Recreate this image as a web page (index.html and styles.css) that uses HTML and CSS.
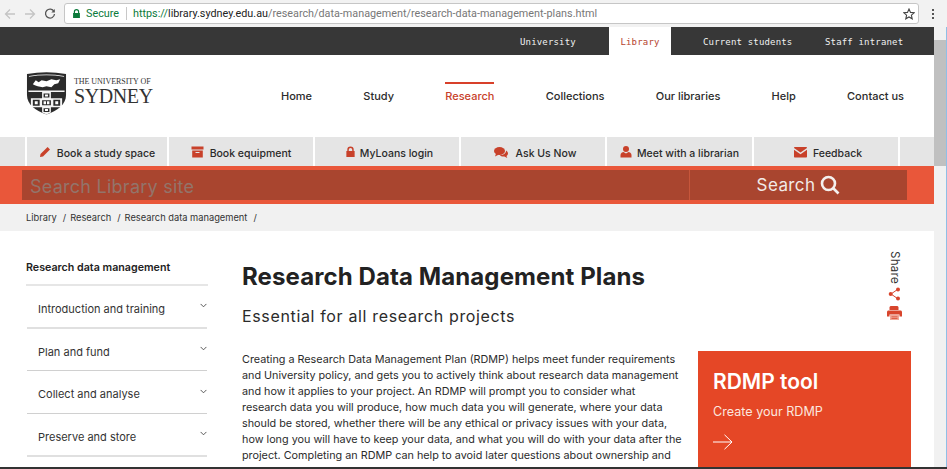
FILE: index.html
```html
<!DOCTYPE html>
<html lang="en">
<head>
<meta charset="utf-8">
<title>Research Data Management Plans</title>
<link rel="stylesheet" href="styles.css">
</head>
<body>
<div class="chrome">
  <svg class="cbtn faint" viewBox="0 0 12 12"><path d="M11 6H1.500M6 1.500 1.500 6 6 10.500"/></svg>
  <svg class="cbtn faint" viewBox="0 0 12 12"><path d="M1 6h9.500M6 1.500 10.500 6 6 10.500"/></svg>
  <svg class="cbtn" viewBox="0 0 12 12"><path d="M10 3.500A4.500 4.500 0 1 0 10.500 6"/><path class="fill" d="M10.800 1v3.500H7.300z"/></svg>
  <div class="omni">
    <svg class="lock" viewBox="0 0 10 10"><path d="M2 4.500V3a3 3 0 0 1 6 0v1.500h.8V10H1.200V4.500zm1.300 0h3.400V3a1.700 1.700 0 0 0-3.400 0z"/></svg>
    <span class="secure">Secure</span>
    <span class="osep"></span>
    <span class="url"><span class="https">https://</span><span class="host">library.sydney.edu.au</span>/research/data-management/research-data-management-plans.html</span>
    <svg class="star" viewBox="0 0 12 12"><path d="m6 1 1.500 3.400 3.700.4-2.800 2.400.8 3.600L6 9l-3.200 1.800.8-3.600L.8 4.800l3.700-.4z"/></svg>
  </div>
  <div class="kebab"><i></i><i></i><i></i></div>
</div>
<div class="window">
  <div class="page">
    <nav class="topbar">
      <a class="tab tab-university">University</a>
      <a class="tab tab-library">Library</a>
      <a class="tab tab-students">Current students</a>
      <a class="tab tab-staff">Staff intranet</a>
    </nav>
    <header class="masthead">
      <div class="logo">
        <svg class="crest" viewBox="0 0 42 44">
          <path fill="#2b2b2b" d="M1 2.500Q21-1 41 2.500V24c0 10-9 16-20 20C10 40 1 34 1 24z"/>
          <path fill="#fff" d="M3 4.500Q21 1.500 39 4.500v.8Q21 2.500 3 5.300z"/>
          <path fill="#fff" d="M7 13l3-4 3 2 3-2 5 1 5-2 5 1 4-1-2 4-4 1-3 3-5-1-4 1-5-1-3-1z"/>
          <path fill="#fff" d="M2.500 19.500h37v1.500h-37zM16.500 21h9v21l-4.500 2-4.500-2zM5 27.500h32v9H5z" opacity=".95"/>
          <path fill="#2b2b2b" d="M18 22.500h6v4h-6zM18 37.500h6v4h-6zM7 29h7v6H7zM28 29h7v6h-7zM16.500 29.500h9v5h-9z"/>
          <path fill="#fff" d="M9 30.500h3v3H9zM30 30.500h3v3h-3zM19.500 23.500h3v2h-3zM19.500 38.500h3v2h-3zM18 30.500h2.500v3H18zM21.500 30.500H24v3h-2.500z"/>
        </svg>
        <div class="wordmark">
          <span class="wm-small">THE UNIVERSITY OF</span>
          <span class="wm-big">SYDNEY</span>
        </div>
      </div>
      <nav class="mainnav">
        <a>Home</a>
        <a>Study</a>
        <a class="current">Research</a>
        <a>Collections</a>
        <a>Our libraries</a>
        <a>Help</a>
        <a>Contact us</a>
      </nav>
    </header>
    <nav class="quick">
      <a><svg class="qi" viewBox="0 0 12 12"><path d="M8.600 1 11 3.400 4 10.500 1 11l.5-3z"/></svg>Book a study space</a>
      <a><svg class="qi qi-box" viewBox="0 0 12 12"><path fill-rule="evenodd" d="M0 .5h12v3H0zM.7 4.500h10.600V11.500H.7zM4 6v1h4V6z"/></svg>Book equipment</a>
      <a class="nudge"><svg class="qi qi-lock" viewBox="0 0 12 12"><path fill-rule="evenodd" d="M2.500 5V3.500a3.500 3.500 0 0 1 7 0V5h1v6.500h-9V5zm1.600 0h3.800V3.500a1.900 1.900 0 0 0-3.800 0z"/></svg>MyLoans login</a>
      <a class="nudge ask"><svg class="qi qi-chat" viewBox="0 0 14 12"><ellipse cx="5.500" cy="4" rx="5.500" ry="4"/><path d="m2 6.500-1 3 4-2z"/><path d="M12 3.500c1.500 1 2 2 2 3 0 1.200-.8 2-1.500 2.500l.8 2-3-1.500c-2 .2-3.500-.3-4.500-1.300 3 0 6.500-1.700 6.200-4.700z"/></svg>Ask Us Now</a>
      <a><svg class="qi qi-user" viewBox="0 0 12 12"><circle cx="6" cy="3" r="3"/><path d="M.5 11.500V9c0-2 2-3 3-3l2.500 1.500L8.500 6c1 0 3 1 3 3v2.500z"/></svg>Meet with a librarian</a>
      <a class="nudge"><svg class="qi qi-mail" viewBox="0 0 13 11"><path d="M0 1.500C0 .8.500.5 1 .5h11c.5 0 1 .3 1 1L6.500 6zM0 3.300l6.500 4.400L13 3.300V10c0 .6-.4 1-1 1H1c-.6 0-1-.4-1-1z"/></svg>Feedback</a>
      <span class="quick-end"></span>
    </nav>
    <div class="searchband">
      <div class="searchbox">
        <span class="placeholder">Search Library site</span>
        <span class="searchbtn">Search
          <svg class="sicon" viewBox="0 0 20 20"><circle cx="8.500" cy="8.500" r="6.500"/><path d="m13 13 5.500 5.500"/></svg>
        </span>
      </div>
    </div>
    <div class="crumbs">
      <a>Library</a><span class="slash">/</span><a>Research</a><span class="slash">/</span><a>Research data management</a><span class="slash">/</span>
    </div>
    <main class="main">
      <aside class="side">
        <h2 class="side-title">Research data management</h2>
        <ul class="side-list">
          <li class="thick">Introduction and training<svg class="chev" viewBox="0 0 8 5"><path d="m.7.7 3.300 3.300L7.300.7"/></svg></li>
          <li class="short">Plan and fund<svg class="chev" viewBox="0 0 8 5"><path d="m.7.7 3.300 3.300L7.300.7"/></svg></li>
          <li>Collect and analyse<svg class="chev" viewBox="0 0 8 5"><path d="m.7.7 3.300 3.300L7.300.7"/></svg></li>
          <li class="thick">Preserve and store<svg class="chev" viewBox="0 0 8 5"><path d="m.7.7 3.300 3.300L7.300.7"/></svg></li>
        </ul>
      </aside>
      <article class="article">
        <div class="article-head">
          <div>
            <h1>Research Data Management Plans</h1>
            <p class="lede">Essential for all research projects</p>
          </div>
          <div class="share">
            <span class="share-label">Share</span>
            <svg class="share-icon" viewBox="0 0 13 14"><path class="line" d="M9.500 2.500 3 7l6.500 4.500"/><circle cx="10" cy="2.500" r="2"/><circle cx="2.700" cy="7" r="2"/><circle cx="10" cy="11.500" r="2"/></svg>
            <svg class="print-icon" viewBox="0 0 15 14"><path d="M3.500 0h7l1 1v3h-9V1z"/><path d="M1.500 4.500h12c.8 0 1.500.7 1.500 1.500v4.500h-2.500V8.500h-10v2H0V6c0-.8.700-1.500 1.500-1.500z"/><path d="M3 9h9v5H3z" fill="#f0a898"/><path d="M4.500 10.500h6v.7h-6zM4.500 12h6v.7h-6z"/></svg>
          </div>
        </div>
        <div class="article-body">
          <p class="copy">Creating a Research Data Management Plan (RDMP) helps meet funder requirements<br>and University policy, and gets you to actively think about research data management<br>and how it applies to your project. An RDMP will prompt you to consider what<br>research data you will produce, how much data you will generate, where your data<br>should be stored, whether there will be any ethical or privacy issues with your data,<br>how long you will have to keep your data, and what you will do with your data after the<br>project. Completing an RDMP can help to avoid later questions about ownership and</p>
          <a class="card">
            <strong class="card-title">RDMP tool</strong>
            <span class="card-sub">Create your RDMP</span>
            <svg class="card-arrow" viewBox="0 0 20 16"><path d="M0 8h19M11.500 .8 19 8l-7.500 7.200"/></svg>
          </a>
        </div>
      </article>
    </main>
  </div>
  <div class="scrollbar"><span class="sb-up"></span><span class="thumb"></span></div>
</div>
<div class="bottomline"></div>
</body>
</html>
```
FILE: styles.css
```css
* { box-sizing: border-box; }
html, body { margin: 0; height: 469px; overflow: hidden; background: #fff; }
body { font-family: "Inter", "Liberation Sans", sans-serif; color: #222; display: flex; flex-direction: column; }
a { color: inherit; text-decoration: none; }
h1, h2, p, ul { margin: 0; padding: 0; }

/* browser chrome */
.chrome { height: 27px; flex: none; display: flex; align-items: center; background: #f2f2f2; padding-left: 4px; font-family: "Roboto", sans-serif; }
.cbtn { width: 12px; height: 12px; margin-right: 8px; fill: none; stroke: #555; stroke-width: 1.300; }
.cbtn .fill { fill: #555; stroke: none; }
.cbtn.faint { stroke: #c4c4c4; }
.omni { width: 855px; height: 21px; display: flex; align-items: center; background: #fff; border: 1px solid #c6c6c6; border-radius: 3px; padding: 0 3px 0 7px; font-size: 10.800px; white-space: nowrap; }
.lock { width: 9px; height: 9px; fill: #0b7a3b; margin-right: 5px; }
.secure { color: #0b7a3b; }
.osep { width: 1px; height: 13px; background: #c8c8c8; margin: 0 6px 0 7px; }
.url { color: #777; flex: 1; }
.https { color: #0b7a3b; }
.host { color: #222; }
.star { width: 12px; height: 12px; fill: none; stroke: #444; stroke-width: 1.100; }
.kebab { display: flex; flex-direction: column; gap: 2px; margin-left: 13px; }
.kebab i { width: 2px; height: 2px; background: #555; }

.window { flex: 1; min-height: 0; display: flex; overflow: hidden; }
.page { width: 934px; flex: none; overflow: hidden; }
.scrollbar { width: 13px; flex: none; background: #f1f1f1; border-right: 1px solid #8fbfe6; display: flex; flex-direction: column; align-items: stretch; }
.sb-up { height: 13px; flex: none; }
.thumb { height: 126px; background: #c0c0c0; }
.bottomline { height: 2px; flex: none; background: #333; }

/* top tabs */
.topbar { height: 28px; display: flex; align-items: stretch; background: #373737; font-family: "DejaVu Sans Mono", monospace; font-size: 9px; color: #f1f1f1; letter-spacing: .17px; padding-left: 520px; }
.tab { display: flex; align-items: center; padding-top: 2px; }
.tab-university { width: 89px; }
.tab-library { width: 62px; background: #fff; color: #b5442e; justify-content: center; }
.tab-students { margin-left: 32px; width: 122px; }
.tab-staff { width: 80px; }

/* masthead */
.masthead { height: 82px; display: flex; align-items: flex-start; padding: 16px 30px 0 26px; background: #fff; }
.logo { display: flex; align-items: center; gap: 7px; width: 255px; flex: none; }
.crest { width: 41px; height: 44px; flex: none; }
.wordmark { display: flex; flex-direction: column; font-family: "Liberation Serif", serif; color: #333; margin-top: -4px; white-space: nowrap; }
.wm-small { font-size: 8px; line-height: 10px; letter-spacing: -.05px; }
.wm-big { font-size: 20px; line-height: 18px; letter-spacing: -.4px; }
.mainnav { flex: 1; display: flex; justify-content: space-between; font-size: 11px; font-weight: 500; color: #2b2b2b; padding-top: 11px; }
.mainnav a { height: 27px; padding-top: 5px; border-top: 2px solid transparent; }
.mainnav .current { color: #c8412a; border-top-color: #d8402a; }

/* quick links */
.quick { height: 29px; display: grid; grid-template-columns: 25px 142px 146px 146px 146px 147px 146px 1fr; background: #fff; font-size: 10.500px; font-weight: 500; color: #2a2a2a; }
.quick::before { content: ""; background: #e5e5e5; }
.quick a, .quick-end { background: #e5e5e5; border-left: 2px solid #fff; display: flex; align-items: center; justify-content: center; padding-top: 3px; }
.qi { width: 12px; height: 12px; margin: -2px 6px 0 0; fill: #c8412a; flex: none; }
.qi-box { width: 13px; margin-right: 6px; }
.qi-lock { width: 11px; margin-right: 4px; }
.qi-chat { width: 14px; margin-right: 8px; }
.qi-user { margin-right: 5px; }
.qi-mail { width: 13px; margin-right: 6px; }
.quick .nudge { padding-left: 4px; }
.quick .ask { padding-top: 4px; }

/* search */
.searchband { height: 38px; background: #e9573a; padding: 4px 27px 4px 22px; }
.searchbox { height: 30px; display: grid; grid-template-columns: 667px 1fr; background: #a9452f; }
.placeholder { display: flex; align-items: center; padding: 2px 0 0 8px; font-size: 18px; color: #93746a; letter-spacing: .25px; }
.searchbtn { display: flex; align-items: center; justify-content: center; gap: 5px; border-left: 1px solid #c7563b; font-size: 17px; color: #f1ebe8; letter-spacing: .4px; }
.sicon { width: 20px; height: 20px; fill: none; stroke: #f4f0ee; stroke-width: 2.600; }

/* breadcrumb */
.crumbs { height: 27px; background: #f1f1f1; padding: 0 0 1px 26px; display: flex; align-items: center; font-size: 9.300px; color: #333; white-space: nowrap; }
.slash { margin: 0 4px 0 6px; }

/* main */
.main { display: grid; grid-template-columns: 182px 1fr; column-gap: 34px; padding: 30px 23px 0 26px; }
.side-title { font-size: 10.700px; font-weight: 600; color: #222; line-height: 13px; padding-bottom: 10px; border-bottom: 2px solid #e6e6e6; }
.side-list { list-style: none; padding: 0 1px; }
.side-list li { height: 43px; display: flex; align-items: center; justify-content: space-between; padding: 4px 0 0 11px; font-size: 11px; color: #333; border-bottom: 1px solid #d0d0d0; }
.side-list li.short { height: 42px; }
.side-list li.thick { border-bottom: 2px solid #e0e0e0; }
.chev { width: 7px; height: 5px; margin-bottom: 6px; fill: none; stroke: #444; stroke-width: 1; }

.article-head { display: flex; justify-content: space-between; height: 92px; padding-right: 8px; }
h1 { font-size: 24px; line-height: 30px; font-weight: 700; color: #222; margin-top: 1px; letter-spacing: .1px; }
.lede { font-size: 16px; line-height: 20px; margin-top: 14px; color: #2b2b2b; letter-spacing: .65px; font-weight: 400; }
.share { display: flex; flex-direction: column; align-items: center; width: 18px; margin-top: -10px; }
.share-label { writing-mode: vertical-rl; font-size: 11.500px; line-height: 13px; color: #333; letter-spacing: .3px; }
.share-icon { width: 13px; height: 14px; margin-top: 3px; fill: #d8452c; }
.share-icon .line { fill: none; stroke: #d8452c; stroke-width: 1; }
.print-icon { width: 15px; height: 14px; margin-top: 5px; fill: #d8452c; }

.article-body { display: flex; justify-content: space-between; align-items: flex-start; margin-top: -2px; }
.copy { font-size: 10.800px; line-height: 16px; color: #2b2b2b; margin-top: 1px; white-space: nowrap; }
.card { width: 213px; height: 130px; flex: none; background: #e54726; color: #fff; padding: 18px 15px; display: flex; flex-direction: column; align-items: flex-start; }
.card-title { font-size: 21px; line-height: 25px; font-weight: 600; }
.card-sub { font-size: 12.600px; line-height: 15px; margin-top: 10px; color: #fbe6df; }
.card-arrow { width: 20px; height: 16px; margin-top: 15px; fill: none; stroke: #fff; stroke-width: 1; }
```
